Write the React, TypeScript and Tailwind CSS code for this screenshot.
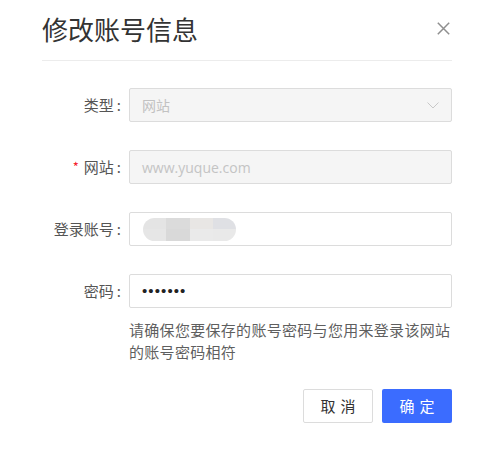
const blocks = ["#e4e4e4", "#dbdbdb", "#e8e6e4", "#dfe0e4", "#e6e6e6", "#d9d9d9", "#eaeaea", "#e9e9e9"];

const Label = ({ text, required }: { text: string; required?: boolean }) => (
  <div className="w-[79px] shrink-0 flex items-center justify-end text-[15px] text-[#555] leading-[20px]">
    {required && <span className="text-[#f5222d] text-[13px] mr-[5px]">*</span>}
    <span>{text}</span>
    <span className="ml-[3px]">:</span>
  </div>
);

export default function App() {
  return (
    <div className="w-[496px] h-[450px] bg-white pl-[42px] pr-[44px] pt-[12px] font-['Noto_Sans_CJK_SC',sans-serif]">
      <div className="h-[49px] border-b border-[#ececec] flex items-start justify-between">
        <h1 className="text-[26px] leading-[34px] text-[#333] font-normal">修改账号信息</h1>
        <button className="mt-[10px] mr-[2px] w-[13px] h-[13px]">
          <svg viewBox="0 0 13 13" width="13" height="13">
            <path d="M0.8 0.8 L12.2 12.2 M12.2 0.8 L0.8 12.2" stroke="#8f8f8f" strokeWidth="1.5" fill="none" />
          </svg>
        </button>
      </div>

      <div className="mt-[27px] flex flex-col gap-[28px]">
        <div className="flex items-center">
          <Label text="类型" />
          <div className="ml-[8px] flex-1 h-[34px] bg-[#f5f5f5] border border-[#dcdcdc] rounded-[2px] flex items-center justify-between pl-[12px] pr-[12px]">
            <span className="text-[14px] text-[#c2c2c2]">网站</span>
            <svg viewBox="0 0 12 7" width="12" height="7">
              <path d="M0.5 0.5 L6 6 L11.5 0.5" stroke="#c8c8c8" strokeWidth="1" fill="none" />
            </svg>
          </div>
        </div>

        <div className="flex items-center">
          <Label text="网站" required />
          <div className="ml-[8px] flex-1 h-[34px] bg-[#f5f5f5] border border-[#dcdcdc] rounded-[2px] flex items-center pl-[12px]">
            <span className="text-[14px] text-[#c4c4c4] font-['Open_Sans',sans-serif]">www.yuque.com</span>
          </div>
        </div>

        <div className="flex items-center">
          <Label text="登录账号" />
          <div className="ml-[8px] flex-1 h-[34px] bg-white border border-[#dcdcdc] rounded-[2px] flex items-center pl-[13px]">
            <div className="w-[93px] h-[23px] rounded-full overflow-hidden flex flex-wrap">
              {blocks.map((c, i) => (
                <div key={i} className="w-[23.25px] h-[11.5px]" style={{ background: c }} />
              ))}
            </div>
          </div>
        </div>

        <div className="flex items-center">
          <Label text="密码" />
          <div className="ml-[8px] flex-1 h-[34px] bg-white border border-[#dcdcdc] rounded-[2px] flex items-center pl-[12px]">
            <span className="text-[15px] leading-[20px] text-[#222] tracking-[1.1px] font-['Liberation_Sans',sans-serif]">•••••••</span>
          </div>
        </div>
      </div>

      <p className="ml-[87px] mt-[11px] text-[15px] leading-[22px] tracking-[0.3px] text-[#5f5f5f]">
        请确保您要保存的账号密码与您用来登录该网站的账号密码相符
      </p>

      <div className="mt-[26px] flex justify-end gap-[9px]">
        <button className="w-[70px] h-[34px] border border-[#dcdcdc] rounded-[2px] bg-white text-[15px] text-[#333] tracking-[5px] pl-[5px]">
          取消
        </button>
        <button className="w-[70px] h-[34px] rounded-[2px] bg-[#3b6cff] text-[15px] text-white tracking-[5px] pl-[5px]">
          确定
        </button>
      </div>
    </div>
  );
}
